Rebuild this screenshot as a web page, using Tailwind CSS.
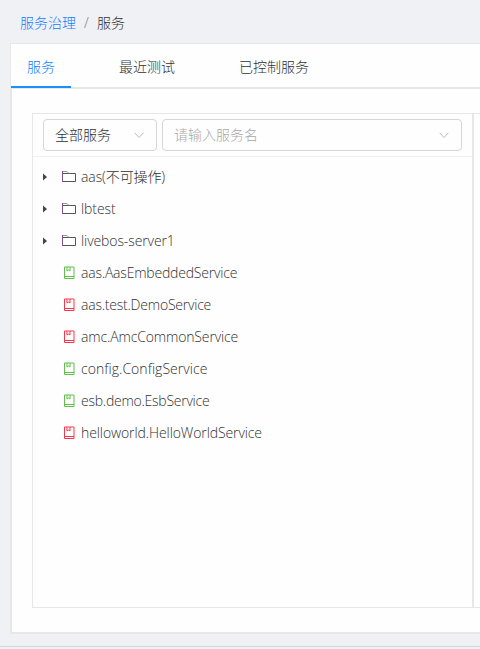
<!DOCTYPE html>
<html lang="zh-CN">
<head>
<meta charset="utf-8">
<title>服务治理</title>
<script src="https://cdn.jsdelivr.net/npm/@tailwindcss/browser@4"></script>
</head>
<body class="w-[480px] h-[649px] overflow-hidden bg-[#f0f1f4] font-['Open_Sans','Noto_Sans_CJK_SC',sans-serif] font-light text-[14px] text-[#303030]">
<svg class="hidden">
  <symbol id="folder" viewBox="0 0 16 14"><path d="M1.5 11.5V3.5H14.5V11.5Z" fill="none" stroke="#555"/><path d="M1 1.5H6L8 3.5" stroke="#999" fill="none"/><path d="M1.5 1V12" stroke="#86508a" fill="none"/></symbol>
  <symbol id="book" viewBox="0 0 12 14"><path d="M1.5 1H11V12.5H1.5ZM1.5 10.5H11M4 1V5L5.5 4L7 5V1" fill="none" stroke="currentColor"/></symbol>
  <symbol id="down" viewBox="0 0 10 7"><path d="M.7.8L5 5.6L9.3.8" fill="none" stroke="currentColor"/></symbol>
  <symbol id="caret" viewBox="0 0 4 8"><path d="M0 .5L4 4L0 7.5Z" fill="currentColor"/></symbol>
</svg>
<div class="flex h-[649px] flex-col">
  <nav class="flex h-[43px] shrink-0 items-center pl-5 pt-[3px] leading-5"><a class="text-[#1080ff]">服务治理</a><span class="w-[21px] text-center text-[#777]">/</span><span>服务</span></nav>
  <main class="ml-[10px] flex h-[591px] shrink-0 flex-col border-t border-b-2 border-[#e7e7e8] bg-[#fefefe]">
    <div class="flex h-[45px] shrink-0 border-b-2 border-l border-[#e7e7e8]">
      <div class="-mb-[1px] flex h-[44px] w-[60px] items-center justify-center border-b-2 border-[#1890ff] pt-[3px] text-[#1080ff]">服务</div>
      <div class="ml-8 flex w-[88px] items-center justify-center pt-[2px]">最近测试</div>
      <div class="ml-8 flex w-[102px] items-center justify-center pt-[2px]">已控制服务</div>
    </div>
    <div class="flex flex-1 border-l-2 border-[#e7e7e8] pt-6 pb-6 pl-5">
      <section class="flex w-[440px] shrink-0 flex-col border-y border-l border-[#e7e7e8]">
        <div class="flex h-[43px] shrink-0 gap-[5px] border-b border-[#f0f0f0] pt-[5px] pl-[10px]">
          <div class="flex h-8 w-[114px] items-center justify-between rounded border border-[#d6d6d6] pr-3 pl-[11px]"><span class="pb-[2px]">全部服务</span><svg class="h-[7px] w-[10px] text-[#bbb]"><use href="#down"/></svg></div>
          <div class="flex h-8 w-[300px] items-center justify-between rounded border border-[#d6d6d6] pr-3 pl-[11px] text-[#a8a8a8]"><span class="pb-[2px]">请输入服务名</span><svg class="h-[7px] w-[10px] text-[#bbb]"><use href="#down"/></svg></div>
        </div>
        <ul class="flex flex-col pt-[4px] pl-[10px] tracking-[-0.1px]">
          <li class="flex h-8 items-center"><svg class="mr-[14px] h-2 w-1 text-[#444]"><use href="#caret"/></svg><svg class="mr-1 h-[14px] w-4"><use href="#folder"/></svg><span class="pb-[2px]">aas(不可操作)</span></li>
          <li class="flex h-8 items-center"><svg class="mr-[14px] h-2 w-1 text-[#444]"><use href="#caret"/></svg><svg class="mr-1 h-[14px] w-4"><use href="#folder"/></svg><span class="pb-[2px]">lbtest</span></li>
          <li class="flex h-8 items-center"><svg class="mr-[14px] h-2 w-1 text-[#444]"><use href="#caret"/></svg><svg class="mr-1 h-[14px] w-4"><use href="#folder"/></svg><span class="pb-[2px]">livebos-server1</span></li>
          <li class="flex h-8 items-center pl-5"><svg class="mr-[6px] h-[14px] w-3 text-[#5fc04c]"><use href="#book"/></svg><span class="pb-[2px] tracking-[-0.2px]">aas.AasEmbeddedService</span></li>
          <li class="flex h-8 items-center pl-5"><svg class="mr-[6px] h-[14px] w-3 text-[#f5384e]"><use href="#book"/></svg><span class="pb-[2px] tracking-[-0.22px]">aas.test.DemoService</span></li>
          <li class="flex h-8 items-center pl-5"><svg class="mr-[6px] h-[14px] w-3 text-[#f5384e]"><use href="#book"/></svg><span class="pb-[2px] tracking-[-0.15px]">amc.AmcCommonService</span></li>
          <li class="flex h-8 items-center pl-5"><svg class="mr-[6px] h-[14px] w-3 text-[#5fc04c]"><use href="#book"/></svg><span class="pb-[2px] tracking-[0.04px]">config.ConfigService</span></li>
          <li class="flex h-8 items-center pl-5"><svg class="mr-[6px] h-[14px] w-3 text-[#5fc04c]"><use href="#book"/></svg><span class="pb-[2px] tracking-[-0.25px]">esb.demo.EsbService</span></li>
          <li class="flex h-8 items-center pl-5"><svg class="mr-[6px] h-[14px] w-3 text-[#f5384e]"><use href="#book"/></svg><span class="pb-[2px]">helloworld.HelloWorldService</span></li>
        </ul>
      </section>
      <section class="flex-1 border-y border-l-2 border-[#e7e7e8]"></section>
    </div>
  </main>
  <footer class="mt-3 h-[3px] shrink-0 border-t border-[#d5d6d8]"></footer>
</div>
</body>
</html>
